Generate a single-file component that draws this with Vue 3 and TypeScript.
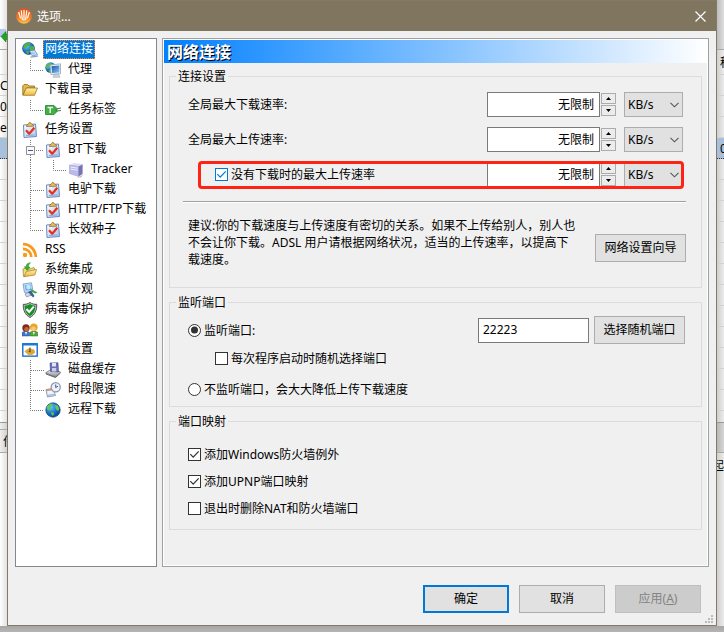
<script setup lang="ts">
import { ref } from 'vue'

type Guide = 'line' | 'tee' | 'elbow' | 'expander'

interface TreeItem {
  label: string
  icon: string
  guides: Guide[]
}

interface Strip {
  height: number
  kind: string
  text?: string
}

const tree: TreeItem[] = [
  { label: '网络连接', icon: 'network', guides: [] },
  { label: '代理', icon: 'proxy', guides: ['elbow'] },
  { label: '下载目录', icon: 'folder', guides: [] },
  { label: '任务标签', icon: 'tag', guides: ['elbow'] },
  { label: '任务设置', icon: 'task', guides: [] },
  { label: 'BT下载', icon: 'task', guides: ['expander'] },
  { label: 'Tracker', icon: 'server', guides: ['line', 'elbow'] },
  { label: '电驴下载', icon: 'task', guides: ['tee'] },
  { label: 'HTTP/FTP下载', icon: 'task', guides: ['tee'] },
  { label: '长效种子', icon: 'task', guides: ['elbow'] },
  { label: 'RSS', icon: 'rss', guides: [] },
  { label: '系统集成', icon: 'integrate', guides: [] },
  { label: '界面外观', icon: 'appearance', guides: [] },
  { label: '病毒保护', icon: 'shield', guides: [] },
  { label: '服务', icon: 'users', guides: [] },
  { label: '高级设置', icon: 'advanced', guides: [] },
  { label: '磁盘缓存', icon: 'disk', guides: ['tee'] },
  { label: '时段限速', icon: 'schedule', guides: ['tee'] },
  { label: '远程下载', icon: 'globe', guides: ['elbow'] },
]

const guidePaths: Record<Guide, string> = {
  line: 'M8.5 0V20',
  tee: 'M8.5 0V20M9 10.5H22',
  elbow: 'M8.5 0V10.5H22',
  expander: 'M8.5 0V6M8.5 15V20M14 10.5H22',
}

const selected = ref('网络连接')

const rates = ref([
  { id: 'down', label: '全局最大下载速率:', value: '无限制', unit: 'KB/s' },
  { id: 'up', label: '全局最大上传速率:', value: '无限制', unit: 'KB/s' },
  { id: 'idle', label: '没有下载时的最大上传速率', value: '无限制', unit: 'KB/s' },
])
const idleLimit = ref(true)

const listenMode = ref('listen')
const port = ref('22223')
const randomOnStart = ref(false)

const mappings = ref([
  { label: '添加Windows防火墙例外', on: true },
  { label: '添加UPNP端口映射', on: true },
  { label: '退出时删除NAT和防火墙端口', on: false },
])

const blankRows = (n: number): Strip[] => Array.from({ length: n }, () => ({ height: 21, kind: 'row' }))

const leftStrip: Strip[] = [
  { height: 50, kind: 'toolbar' },
  { height: 25, kind: 'head' },
  { height: 21, kind: 'row', text: 'C' },
  { height: 21, kind: 'row', text: '0' },
  { height: 21, kind: 'row', text: 'e.' },
  { height: 21, kind: 'picked' },
  ...blankRows(12),
  { height: 12, kind: 'space' },
  { height: 7, kind: 'bar' },
  { height: 23, kind: 'bar inset', text: '件' },
]

const rightStrip: Strip[] = [
  { height: 50, kind: 'title' },
  { height: 25, kind: 'head inset', text: '种' },
  ...blankRows(3),
  { height: 21, kind: 'picked inset', text: '0' },
  ...blankRows(12),
  { height: 12, kind: 'space' },
  { height: 30, kind: 'bar' },
  { height: 24, kind: 'space tail', text: '起' },
]
</script>

<template>
  <div class="desktop">
    <svg class="sprite" aria-hidden="true">
      <defs>
        <radialGradient id="g-globe" cx="35%" cy="30%" r="75%">
          <stop offset="0" stop-color="#6fc4f5" /><stop offset=".55" stop-color="#1e78c8" /><stop offset="1" stop-color="#0a3f8c" />
        </radialGradient>
        <linearGradient id="g-fold" x1="0" y1="0" x2="0" y2="1">
          <stop offset="0" stop-color="#fff2b0" /><stop offset="1" stop-color="#efb83c" />
        </linearGradient>
        <linearGradient id="g-board" x1="0" y1="0" x2="1" y2="1">
          <stop offset="0" stop-color="#fff" /><stop offset="1" stop-color="#a9c4ee" />
        </linearGradient>
        <linearGradient id="g-screen" x1="0" y1="0" x2="1" y2="1">
          <stop offset="0" stop-color="#1a4f9c" /><stop offset="1" stop-color="#7cc7ff" />
        </linearGradient>
        <linearGradient id="g-metal" x1="0" y1="0" x2="0" y2="1">
          <stop offset="0" stop-color="#f4f4f6" /><stop offset="1" stop-color="#85878f" />
        </linearGradient>
        <linearGradient id="g-logo" x1="0" y1="0" x2="0" y2="1">
          <stop offset="0" stop-color="#e0521c" /><stop offset=".6" stop-color="#f47a22" /><stop offset="1" stop-color="#ffc14a" />
        </linearGradient>
      </defs>
      <symbol id="i-network" viewBox="0 0 16 16">
        <circle cx="6.5" cy="6.5" r="6" fill="url(#g-globe)" stroke="#134a86" stroke-width=".6" />
        <path d="M2 3C4 .8 7 .5 8.500 1L7.500 3.500 5 4.500 4 7 2 6ZM9 4L12 4.500 12 8 9.500 9 7.500 7ZM4 9L7 9.500 6.500 12 4.500 11.500Z" fill="#51b43c" />
        <path d="M7.500 9L12.500 8 15.500 12.500 10.500 14Z" fill="#d7e7f8" stroke="#6b8bb2" stroke-width=".8" />
        <path d="M9 10L12 9.400 13.500 12 10.800 12.700Z" fill="#9fcbf2" />
        <path d="M8.500 15.200L15.800 14" stroke="#8ba3bd" stroke-width="1.300" />
      </symbol>
      <symbol id="i-proxy" viewBox="0 0 16 16">
        <circle cx="5.500" cy="5.500" r="5.200" fill="url(#g-globe)" />
        <path d="M1.500 2.500L5 .7 7 2.500 4 4 3 7 1 5.500ZM3 8.500L6 8 5 10.500Z" fill="#5bbb45" />
        <path d="M5 3L15.500 1.800V11.800L6 12.500Z" fill="#e8eef4" stroke="#8fa5be" stroke-width=".8" />
        <path d="M6.500 4.300L14.300 3.400V10.500L7.200 11Z" fill="url(#g-screen)" />
        <path d="M9 12.500L13.500 12 15 15.300H8Z" fill="#cfd1d5" stroke="#9a9fa6" stroke-width=".5" />
      </symbol>
      <symbol id="i-folder" viewBox="0 0 16 16">
        <path d="M.8 13V3.800L2 2.500H5.500L7 4H12.500V6H4.500Z" fill="#e9b944" stroke="#8a6a1c" stroke-width=".8" />
        <path d="M1 13.300L4.300 6H15.500L12.500 13.300Z" fill="url(#g-fold)" stroke="#9b7722" stroke-width=".8" />
      </symbol>
      <symbol id="i-tag" viewBox="0 0 16 16">
        <path d="M.5 3.500H9L12 6.500V9.500L9 12.500H.5Z" fill="#3faf46" stroke="#23812c" stroke-width=".8" />
        <path d="M2.500 5.500H8M5.200 5.500V11" stroke="#e5f7e3" stroke-width="1.500" />
        <path d="M10 8H12M12 6.800L16 6M12 9L16 8.500" stroke="#477b48" stroke-width="1" fill="none" />
      </symbol>
      <symbol id="i-task" viewBox="0 0 16 16">
        <path d="M1.500 3L13.500 2 14.500 14.500 2 15.500Z" fill="url(#g-board)" stroke="#6d87c0" stroke-width="1" />
        <path d="M4.500 4.500C4 2.500 6.300 3 6.500 1.700 6.800 0 9 .1 9.300 1.700 9.500 2.700 12 2 11.500 4.200Z" fill="#e9bd5b" stroke="#876428" stroke-width=".7" />
        <path d="M4 8.300L7.200 11.800 12.300 5.800" stroke="#df3419" stroke-width="2.200" fill="none" />
        <path d="M4 13.500L12.500 12.800" stroke="#8aaae2" stroke-width="1.200" />
      </symbol>
      <symbol id="i-server" viewBox="0 0 16 16">
        <path d="M1.500 3L6 1 14.500 2 11 4.500Z" fill="#dcdcf8" />
        <path d="M1.500 3L10.500 4.500V14.500L1.500 11.500Z" fill="#b9b9ea" stroke="#9a9ad4" stroke-width=".5" />
        <path d="M10.500 4.500L14.600 2.200V12L10.500 14.500Z" fill="#7474b2" />
        <path d="M2.700 5L9.500 6.200M2.700 7L9.500 8.300" stroke="#efeffd" stroke-width="1" />
        <path d="M9 15.500L15 12.800 13 15.500Z" fill="#bbb" />
      </symbol>
      <symbol id="i-rss" viewBox="0 0 16 16">
        <circle cx="3" cy="13" r="2.200" fill="#f89a1c" />
        <path d="M1 6.800A8.200 8.200 0 0 1 9.200 15M1 2.200A12.800 12.800 0 0 1 13.800 15" stroke="#f89a1c" stroke-width="2.700" fill="none" />
      </symbol>
      <symbol id="i-integrate" viewBox="0 0 16 16">
        <path d="M1.500 14.500L1 7 4 6 6 7.500 12 5.500 13 8Z" fill="#f3d878" stroke="#a68a3a" stroke-width=".8" />
        <path d="M2 14.700L4.500 9.500 14.500 7.500 12.800 13Z" fill="url(#g-fold)" stroke="#a68a3a" stroke-width=".8" />
        <path d="M8.500 .8C5 1 4 3 4.300 5L2.300 4.700 5.200 8.500 8 5 6.300 5C6 3.500 6.800 2.300 8.500 .8Z" fill="#35b526" stroke="#16850f" stroke-width=".5" />
      </symbol>
      <symbol id="i-appearance" viewBox="0 0 16 16">
        <path d="M1 2L9.500 .8 11 9.500 2.500 10.500Z" fill="#cfe3f8" stroke="#7d9cc6" stroke-width=".9" />
        <path d="M2.500 3.200L8.800 2.200 9.600 8 3.500 8.800Z" fill="#77b6ee" />
        <circle cx="6.500" cy="5" r="2.200" fill="#bfeaff" />
        <path d="M3 12L8 10 10 13 4.500 14.800Z" fill="#d5dce8" stroke="#7081a2" stroke-width=".7" />
        <path d="M8 6.500L15.500 10.500 13.500 11.500 10 10Z" fill="#3aa54a" />
        <path d="M6 10L11 15.500 12.500 14 9 8.500Z" fill="#3b5f8e" />
      </symbol>
      <symbol id="i-shield" viewBox="0 0 16 16">
        <path d="M8 .5C6 2 3.500 2.500 1.300 2.300 1 8 3 12.800 8 15.500 13 12.800 15 8 14.700 2.300 12.500 2.500 10 2 8 .5Z" fill="#c4c8c4" stroke="#4c504c" stroke-width="1" />
        <path d="M8 2C6.300 3.100 4.500 3.500 2.600 3.500 2.500 8 4.100 12 8 14.200 11.900 12 13.500 8 13.400 3.500 11.500 3.500 9.700 3.100 8 2Z" fill="#158f27" />
        <path d="M4.500 7L7.200 10 11.800 4.700" stroke="#fff" stroke-width="2" fill="none" />
      </symbol>
      <symbol id="i-users" viewBox="0 0 16 16">
        <path d="M0 14V10.500C1 9 6.500 9 7.500 10.500V14Z" fill="#3878cf" stroke="#214d8d" stroke-width=".5" />
        <path d="M8 14V10.500C9 8.800 14.800 8.800 15.800 10.500V14Z" fill="#50a83a" stroke="#2f6e24" stroke-width=".5" />
        <circle cx="4" cy="6" r="3.700" fill="#7c2f18" />
        <circle cx="4.600" cy="7.300" r="2.300" fill="#c8643c" />
        <circle cx="11.800" cy="5.300" r="3.800" fill="#e7a52a" />
        <circle cx="11.400" cy="6.800" r="2.300" fill="#fcc77c" />
        <path d="M3 10L4 13 5 10ZM10.800 10L11.800 13 12.800 10Z" fill="#fff" />
      </symbol>
      <symbol id="i-advanced" viewBox="0 0 16 16">
        <path d="M.8 1.800H15.200V14.200H.8Z" fill="#fff" stroke="#0a63c0" stroke-width="1.300" />
        <path d="M.2 1H15.800V3.500H.2Z" fill="#1d78d8" />
        <path d="M3 9.500C4 7.500 6 8 7 6.500L12 8 12.800 10.500 10 12.500H6Z" fill="#e3a92c" stroke="#b58a2c" stroke-width=".5" />
        <path d="M8 5.500V10M6.800 9L8 10.300" stroke="#473a1c" stroke-width="1" fill="none" />
      </symbol>
      <symbol id="i-disk" viewBox="0 0 16 16">
        <path d="M.5 11L6 7.500 15.500 10 10.500 15Z" fill="url(#g-metal)" stroke="#606269" stroke-width=".7" />
        <path d="M1 12L10.500 15.500 15.500 11" stroke="#55565d" stroke-width=".9" fill="none" />
        <path d="M5 1L13 .8 13.500 10 5.500 9.500Z" fill="#6c70b2" stroke="#44477f" stroke-width=".6" />
        <path d="M7 1H11V4.500H7Z" fill="#dfe4f6" />
        <path d="M7 6H11.300V9.500H7Z" fill="#c9cee3" />
      </symbol>
      <symbol id="i-schedule" viewBox="0 0 16 16">
        <path d="M1 7.500L8 6.500 10.500 13.500 2.500 15Z" fill="#eef2fa" stroke="#7187b2" stroke-width=".8" />
        <path d="M1 7.500L8 6.500 8.500 8 1.300 9.200Z" fill="#e28b6a" />
        <path d="M3 13.300L9.500 12.300" stroke="#9fb5dc" stroke-width="1.200" />
        <circle cx="10.700" cy="5.300" r="4.600" fill="#e9f1fa" stroke="#8b93a2" stroke-width="1.200" />
        <path d="M10.700 2.500V5.500L13 4.200" stroke="#446" stroke-width=".9" fill="none" />
      </symbol>
      <symbol id="i-globe" viewBox="0 0 16 16">
        <circle cx="8" cy="8" r="7.200" fill="url(#g-globe)" stroke="#0c3f86" stroke-width=".7" />
        <path d="M2 4.500L5 1.700 7 1.700 7.500 3.500 5.500 5 6 7.500 4 8.500 2 7ZM10 3L12.500 3.300 14.300 6.500 13.500 9 11.500 8 10.500 6ZM6 10.500L9 10.500 8.500 13.500 7 13.500Z" fill="#5ec85a" />
      </symbol>
    </svg>

    <aside class="strip strip-left" aria-hidden="true">
      <div v-for="(s, i) in leftStrip" :key="i" :class="['cell', s.kind]" :style="{ height: s.height + 'px' }">
        <svg v-if="s.kind === 'toolbar'" class="leaf" viewBox="0 0 8 16">
          <path d="M0 1L6 1V9H0Z" fill="#b9c6f0" />
          <path d="M1 8.500L6 3.500V6H8V11.500H6V14Z" fill="#1fa525" stroke="#0e7916" stroke-width=".6" />
        </svg>
        {{ s.text }}
      </div>
    </aside>

    <main class="dialog">
      <header class="titlebar">
        <svg class="logo" viewBox="0 0 16 16" aria-hidden="true">
          <circle cx="8" cy="8" r="7.800" fill="url(#g-logo)" />
          <path d="M2.800 4.500L4.500 10M5.300 2.800L6.300 11.500M8 2.300V12M10.700 2.800L9.700 11.500M13.200 4.500L11.500 10" stroke="#fff4e6" stroke-width="1.300" stroke-linecap="round" />
        </svg>
        <h1>选项...</h1>
        <button class="close" type="button" aria-label="关闭">
          <svg viewBox="0 0 11 11"><path d="M.5 .5L10.500 10.500M10.500 .5L.5 10.500" stroke="#fff" stroke-width="1.200" /></svg>
        </button>
      </header>

      <div class="body">
        <nav class="tree">
          <button
            v-for="item in tree"
            :key="item.label"
            type="button"
            :class="['node', { active: item.label === selected }]"
            @click="selected = item.label"
          >
            <svg v-for="(g, i) in item.guides" :key="i" class="guide" viewBox="0 0 23 20">
              <path :d="guidePaths[g]" fill="none" stroke="#7a7a7a" stroke-dasharray="1 1" />
              <template v-if="g === 'expander'">
                <path d="M4.500 6.500H12.500V14.500H4.500Z" fill="#fafafa" stroke="#919191" />
                <path d="M6 10.500H11" stroke="#3c55a5" />
              </template>
            </svg>
            <svg class="icon"><use :href="'#i-' + item.icon" /></svg>
            <span class="name">{{ item.label }}</span>
          </button>
        </nav>

        <section class="panel">
          <h2>网络连接</h2>
          <div class="groups">
            <fieldset class="speed">
              <legend>连接设置</legend>
              <div class="rates">
                <div v-for="r in rates" :key="r.id" :class="['rate', r.id]">
                  <label v-if="r.id === 'idle'" class="tick blue indent">
                    <input v-model="idleLimit" type="checkbox" />{{ r.label }}
                  </label>
                  <label v-else :for="'rate-' + r.id">{{ r.label }}</label>
                  <input :id="'rate-' + r.id" v-model="r.value" class="field amount" type="text" :aria-label="r.label" />
                  <span class="spin">
                    <button type="button" aria-label="增加"><svg viewBox="0 0 5 3"><path d="M0 3L2.500 0 5 3Z" /></svg></button>
                    <button type="button" aria-label="减少"><svg viewBox="0 0 5 3"><path d="M0 0L2.500 3 5 0Z" /></svg></button>
                  </span>
                  <span class="unit">
                    <select v-model="r.unit" :aria-label="r.label">
                      <option>KB/s</option>
                      <option>MB/s</option>
                    </select>
                    <svg viewBox="0 0 9 6"><path d="M.5 .8L4.500 4.800 8.500 .8" fill="none" stroke="#555" stroke-width="1.100" /></svg>
                  </span>
                </div>
              </div>
              <hr />
              <div class="advice">
                <p>建议:你的下载速度与上传速度有密切的关系。如果不上传给别人，别人也不会让你下载。ADSL 用户请根据网络状况，适当的上传速率，以提高下载速度。</p>
                <button class="btn wide" type="button">网络设置向导</button>
              </div>
            </fieldset>

            <fieldset class="listen">
              <legend>监听端口</legend>
              <div class="port">
                <label class="tick"><input v-model="listenMode" type="radio" name="listen" value="listen" />监听端口:</label>
                <input v-model="port" class="field number" type="text" aria-label="监听端口" />
                <button class="btn wide" type="button">选择随机端口</button>
              </div>
              <label class="tick indent start"><input v-model="randomOnStart" type="checkbox" />每次程序启动时随机选择端口</label>
              <label class="tick"><input v-model="listenMode" type="radio" name="listen" value="none" />不监听端口，会大大降低上传下载速度</label>
            </fieldset>

            <fieldset class="mapping">
              <legend>端口映射</legend>
              <div class="maps">
                <label v-for="m in mappings" :key="m.label" class="tick"><input v-model="m.on" type="checkbox" />{{ m.label }}</label>
              </div>
            </fieldset>
          </div>
        </section>
      </div>

      <footer>
        <button class="btn action primary" type="button">确定</button>
        <button class="btn action" type="button">取消</button>
        <button class="btn action" type="button" disabled>应用(<u>A</u>)</button>
      </footer>
      <svg class="grip" viewBox="0 0 8 8" aria-hidden="true">
        <path d="M6 0h2v2H6zM3 3h2v2H3zM6 3h2v2H6zM0 6h2v2H0zM3 6h2v2H3zM6 6h2v2H6z" fill="#bcbcbc" />
      </svg>
    </main>

    <aside class="strip strip-right" aria-hidden="true">
      <div v-for="(s, i) in rightStrip" :key="i" :class="['cell', s.kind]" :style="{ height: s.height + 'px' }">{{ s.text }}</div>
    </aside>
  </div>
</template>

<style>
body {
  margin: 0;
  background: #b3b3b3;
}
</style>

<style scoped>
* {
  box-sizing: border-box;
}

.desktop {
  display: grid;
  grid-template-columns: 7px minmax(0, 1fr) 7px;
  min-height: 100vh;
  padding-bottom: 6px;
  background: linear-gradient(to top, #b5b5b5, #a6a6a6 6px);
  color: #000;
  font: 12px/17px "Noto Sans", "Noto Sans CJK SC", sans-serif;
}

button,
input,
select {
  font: inherit;
  color: inherit;
}

.sprite {
  position: absolute;
  width: 0;
  height: 0;
}

.strip {
  display: flex;
  flex-direction: column;
  overflow: hidden;
  background: linear-gradient(to right, #fff, #e2e2e2);
}

.strip-right {
  background: linear-gradient(to right, #cfcfcf, #ececec);
}

.cell {
  display: flex;
  flex: none;
  align-items: center;
  border-bottom: 1px solid #d2d2d2;
  white-space: nowrap;
}

.inset {
  padding-left: 3px;
}

.toolbar,
.title {
  border-color: #aaa;
}

.title {
  background: linear-gradient(to right, #bdbdbd, #dedede);
}

.picked {
  background: #a9c0dc;
  border-bottom: 1px dotted #333;
}

.space {
  border-color: #999;
}

.tail {
  justify-content: flex-end;
  border: 0;
}

.bar {
  background: linear-gradient(to right, #efefef, #d2d2d2);
  border-color: #aaa;
}

.strip-right .bar {
  background: linear-gradient(to right, #b8b8b8, #d6d6d6);
}

.leaf {
  width: 8px;
  height: 16px;
  flex: none;
  margin-top: 22px;
}

.dialog {
  position: relative;
  display: flex;
  flex-direction: column;
  border: 1px solid #857a65;
  background: #f0f0f0;
}

.titlebar {
  display: flex;
  align-items: center;
  gap: 5px;
  height: 30px;
  padding: 0 10px 0 8px;
  background: #807660;
  color: #fff;
}

.logo {
  width: 16px;
  height: 16px;
}

h1 {
  flex: 1;
  margin: 0;
  font-size: 12px;
  font-weight: 400;
  line-height: 15px;
}

.close {
  display: flex;
  padding: 0;
  border: 0;
  background: none;
}

.close svg {
  width: 11px;
  height: 11px;
}

.body {
  display: flex;
  flex: 1;
  gap: 5px;
  padding: 7px 7px 0;
}

.tree {
  display: flex;
  flex: none;
  flex-direction: column;
  width: 142px;
  padding: 1px 0;
  border: 1px solid #828790;
  background: #fff;
}

.node {
  display: flex;
  align-items: center;
  height: 20px;
  padding: 0 0 0 6px;
  border: 0;
  background: none;
  text-align: left;
  white-space: nowrap;
}

.guide {
  flex: none;
  width: 23px;
  height: 20px;
}

.icon {
  flex: none;
  width: 16px;
  height: 16px;
  margin-right: 5px;
}

.name {
  align-self: flex-start;
  height: 19px;
  padding: 0 1px;
  border: 1px solid transparent;
  line-height: 16px;
}

.active .name {
  border: 1px dotted #ff8728;
  background: #0078d7;
  color: #fff;
}

.panel {
  flex: 1;
  min-width: 0;
  padding: 1px;
  border: 1px solid #a0a0a8;
  background: #f0f0f0;
  box-shadow: inset 0 0 0 1px #fff;
}

h2 {
  height: 23px;
  margin: 0;
  padding-left: 3px;
  background: linear-gradient(to right, #0080ff, #fff);
  color: #fff;
  font-size: 16px;
  line-height: 24px;
  text-shadow: 1px 1px 0 #000;
}

.groups {
  display: flex;
  flex-direction: column;
  gap: 6px;
  padding: 5px;
}

fieldset {
  min-width: 0;
  margin: 0;
  border: 1px solid #dcdcdc;
}

legend {
  height: 16px;
  padding: 0 2px;
  margin-left: -12px;
  line-height: 18px;
}

.speed {
  padding: 8px 15px 19px 18px;
}

.rates {
  display: flex;
  flex-direction: column;
  gap: 10px;
  padding-right: 3px;
}

.rate {
  position: relative;
  display: flex;
  align-items: center;
  height: 25px;
}

.rate > label {
  flex: 1;
}

.idle::after {
  content: "";
  position: absolute;
  inset: -1px -1px -2px 10px;
  border: 3px solid #ff2313;
  border-radius: 4px;
  pointer-events: none;
}

.field {
  height: 25px;
  padding: 0 5px 2px;
  border: 1px solid #7a7a7a;
  border-radius: 0;
  background: #fff;
  outline: 0;
}

.amount {
  width: 113px;
  text-align: right;
}

.number {
  width: 111px;
  padding: 0 4px 2px;
}

.spin {
  display: flex;
  flex-direction: column;
  gap: 1px;
  width: 15px;
  margin: 0 8px 0 1px;
}

.spin button {
  display: flex;
  align-items: center;
  justify-content: center;
  height: 11px;
  padding: 0;
  border: 1px solid #acacac;
  background: #ececec;
}

.spin svg {
  width: 5px;
  height: 3px;
}

.unit {
  position: relative;
  display: flex;
  width: 59px;
}

.unit select {
  width: 100%;
  height: 25px;
  padding: 0 3px;
  border: 1px solid #adadad;
  border-radius: 0;
  appearance: none;
  background: #e1e1e1;
}

.unit svg {
  position: absolute;
  top: 10px;
  right: 4px;
  width: 9px;
  height: 6px;
  pointer-events: none;
}

hr {
  height: 2px;
  margin: 14px 0 14px -5px;
  border: 0;
  border-top: 1px solid #a0a0a0;
  border-bottom: 1px solid #fff;
}

.advice {
  display: flex;
  align-items: flex-start;
  gap: 17px;
}

.advice p {
  flex: 1;
  margin: 0;
}

.advice .btn {
  margin-top: 17px;
}

.btn {
  height: 28px;
  padding: 0 0 2px;
  border: 1px solid #adadad;
  background: #e1e1e1;
}

.wide {
  flex: none;
  width: 91px;
}

.tick {
  display: flex;
  align-items: center;
  gap: 3px;
}

.tick input {
  display: flex;
  flex: none;
  width: 13px;
  height: 13px;
  margin: 0;
  border: 1px solid #333;
  appearance: none;
  background: #fff;
  color: #333;
}

.tick.blue input {
  border-color: #0078d7;
  color: #0078d7;
}

.tick input[type="radio"] {
  border-radius: 50%;
}

.tick input:checked::before {
  content: "";
  width: 11px;
  height: 11px;
  background: currentColor;
  clip-path: polygon(8% 51%, 16% 43%, 38% 66%, 84% 18%, 92% 26%, 38% 81%);
}

.tick input[type="radio"]:checked::before {
  clip-path: circle(32%);
}

.indent {
  padding-left: 27px;
}

.listen {
  padding: 6px 16px 8px 18px;
}

.port {
  display: flex;
  align-items: center;
}

.port .tick {
  flex: 1;
}

.port .number {
  margin-right: 5px;
}

.start {
  margin: 6px 0 14px;
}

.mapping {
  padding: 17px 18px 12px;
}

.maps {
  display: flex;
  flex-direction: column;
  gap: 10px;
}

footer {
  display: flex;
  justify-content: flex-end;
  gap: 10px;
  padding: 18px 15px 12px;
}

.action {
  width: 86px;
}

.primary {
  border: 2px solid #0078d7;
}

.btn:disabled {
  border-color: #bfbfbf;
  background: #ccc;
  color: #838383;
}

.grip {
  position: absolute;
  right: 3px;
  bottom: 2px;
  width: 8px;
  height: 8px;
}
</style>
